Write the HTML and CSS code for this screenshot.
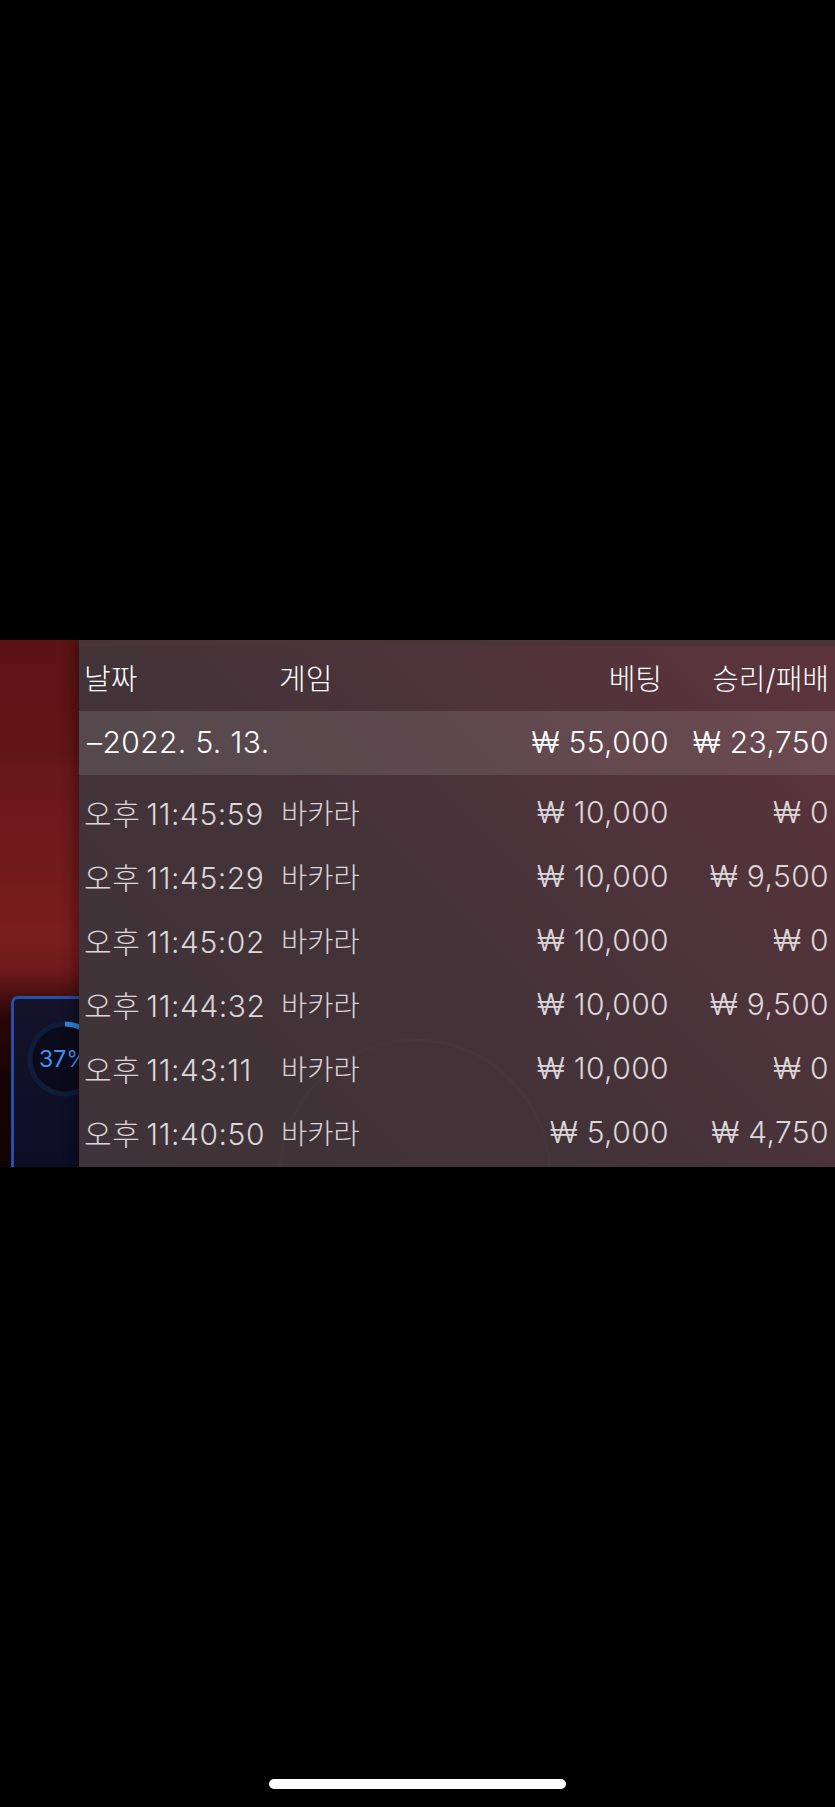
FILE: index.html
```html
<!DOCTYPE html>
<html lang="ko">
<head>
<meta charset="utf-8">
<title>베팅 내역</title>
<link rel="stylesheet" href="styles.css">
</head>
<body>
<main class="stage">
  <aside class="side">
    <div class="card">
      <div class="ring">
        <svg class="ring-svg" width="78" height="78" viewBox="0 0 78 78">
          <circle class="ring-track" cx="39" cy="39" r="35"></circle>
          <circle class="ring-value" cx="39" cy="39" r="35" pathLength="100" stroke-dasharray="37 63" transform="rotate(-90 39 39)"></circle>
        </svg>
        <span class="ring-label">37%</span>
      </div>
    </div>
  </aside>
  <section class="panel">
    <svg class="ghost" width="756" height="521" viewBox="0 0 756 521">
      <circle class="ghost-arc" cx="336" cy="529" r="135"></circle>
    </svg>
    <div class="row head">
      <div class="c-date">날짜</div>
      <div class="c-game">게임</div>
      <div class="c-bet">베팅</div>
      <div class="c-win">승리/패배</div>
    </div>
    <div class="row total">
      <div class="c-date">–2022. 5. 13.</div>
      <div class="c-game"></div>
      <div class="c-bet">₩ 55,000</div>
      <div class="c-win">₩ 23,750</div>
    </div>
    <div class="rows">
      <div class="row item"><div class="c-date">오후 11:45:59</div><div class="c-game">바카라</div><div class="c-bet">₩ 10,000</div><div class="c-win">₩ 0</div></div>
      <div class="row item"><div class="c-date">오후 11:45:29</div><div class="c-game">바카라</div><div class="c-bet">₩ 10,000</div><div class="c-win">₩ 9,500</div></div>
      <div class="row item"><div class="c-date">오후 11:45:02</div><div class="c-game">바카라</div><div class="c-bet">₩ 10,000</div><div class="c-win">₩ 0</div></div>
      <div class="row item"><div class="c-date">오후 11:44:32</div><div class="c-game">바카라</div><div class="c-bet">₩ 10,000</div><div class="c-win">₩ 9,500</div></div>
      <div class="row item"><div class="c-date">오후 11:43:11</div><div class="c-game">바카라</div><div class="c-bet">₩ 10,000</div><div class="c-win">₩ 0</div></div>
      <div class="row item"><div class="c-date">오후 11:40:50</div><div class="c-game">바카라</div><div class="c-bet">₩ 5,000</div><div class="c-win">₩ 4,750</div></div>
    </div>
  </section>
</main>
<div class="home-bar"></div>
</body>
</html>
```
FILE: styles.css
```css
* { box-sizing: border-box; }
html, body { margin: 0; padding: 0; background: #000; }
body {
  width: 835px;
  height: 1807px;
  overflow: hidden;
  padding-top: 640px;
  font-family: Inter, "Noto Sans CJK KR", sans-serif;
  font-size: 29px;
  font-weight: 300;
  color: #fff;
}
.stage {
  display: flex;
  height: 527px;
  overflow: hidden;
}
.side {
  flex: 0 0 79px;
  width: 79px;
  padding-top: 356px;
  background: linear-gradient(180deg, #5c1315 0, #611517 115px, #6a181a 130px, #701a1b 215px, #7a1d1d 300px, #6e1a1a 330px, #2b0708 375px, #170404 440px, #120303 527px);
}
.card {
  width: 140px;
  height: 190px;
  margin-left: 11px;
  padding: 21px 0 0 12px;
  border: 3px solid #2451a8;
  border-radius: 7px;
  background: linear-gradient(180deg, #15122a 0, #0a0e24 100%);
}
.ring {
  position: relative;
  width: 78px;
  height: 78px;
}
.ring-svg { display: block; }
.ring-track { fill: #0a0a1c; stroke: #101c38; stroke-width: 5; }
.ring-value { fill: none; stroke: #2f86dc; stroke-width: 5; }
.ring-label {
  position: absolute;
  top: 20px;
  left: 13px;
  font-size: 23px;
  font-weight: 400;
  line-height: 38px;
  color: #3f94ee;
}
.panel {
  flex: 1;
  position: relative;
  border-top: 6px solid #4a3438;
  background: linear-gradient(225deg, #5e343c 0, #54333a 20%, #4a333a 41%, #423338 60%, #3e3338 100%);
  box-shadow: -6px 0 10px rgba(0, 0, 0, .28);
}
.ghost {
  position: absolute;
  top: 0;
  left: 0;
}
.ghost-arc { fill: none; stroke: rgba(255, 255, 255, .016); stroke-width: 3; }
.row {
  position: relative;
  display: flex;
  align-items: center;
  padding: 0 6px 0 5px;
}
.head { height: 65px; padding-bottom: 4px; }
.total { height: 64px; background: rgba(255, 255, 255, .11); padding-bottom: 2px; font-size: 30px; letter-spacing: .4px; }
.total .c-date { padding-left: 3px; }
.rows { padding-top: 6px; }
.item { height: 64px; padding-bottom: 3px; font-size: 30px; letter-spacing: .4px; color: #dcd6d8; }
.item .c-date { width: 197px; word-spacing: -3px; letter-spacing: .55px; }
.item .c-game { font-size: 28.5px; letter-spacing: 0; }
.c-date { width: 198px; white-space: nowrap; }
.c-game { width: 90px; white-space: nowrap; }
.c-bet { flex: 1; text-align: right; white-space: nowrap; }
.c-win { width: 160px; text-align: right; white-space: nowrap; }
.head .c-game { margin-left: -3px; margin-right: 3px; }
.head .c-bet { padding-right: 7px; }
.home-bar {
  width: 297px;
  height: 10px;
  margin: 612px 0 0 269px;
  border-radius: 5px;
  background: #fff;
}
```
